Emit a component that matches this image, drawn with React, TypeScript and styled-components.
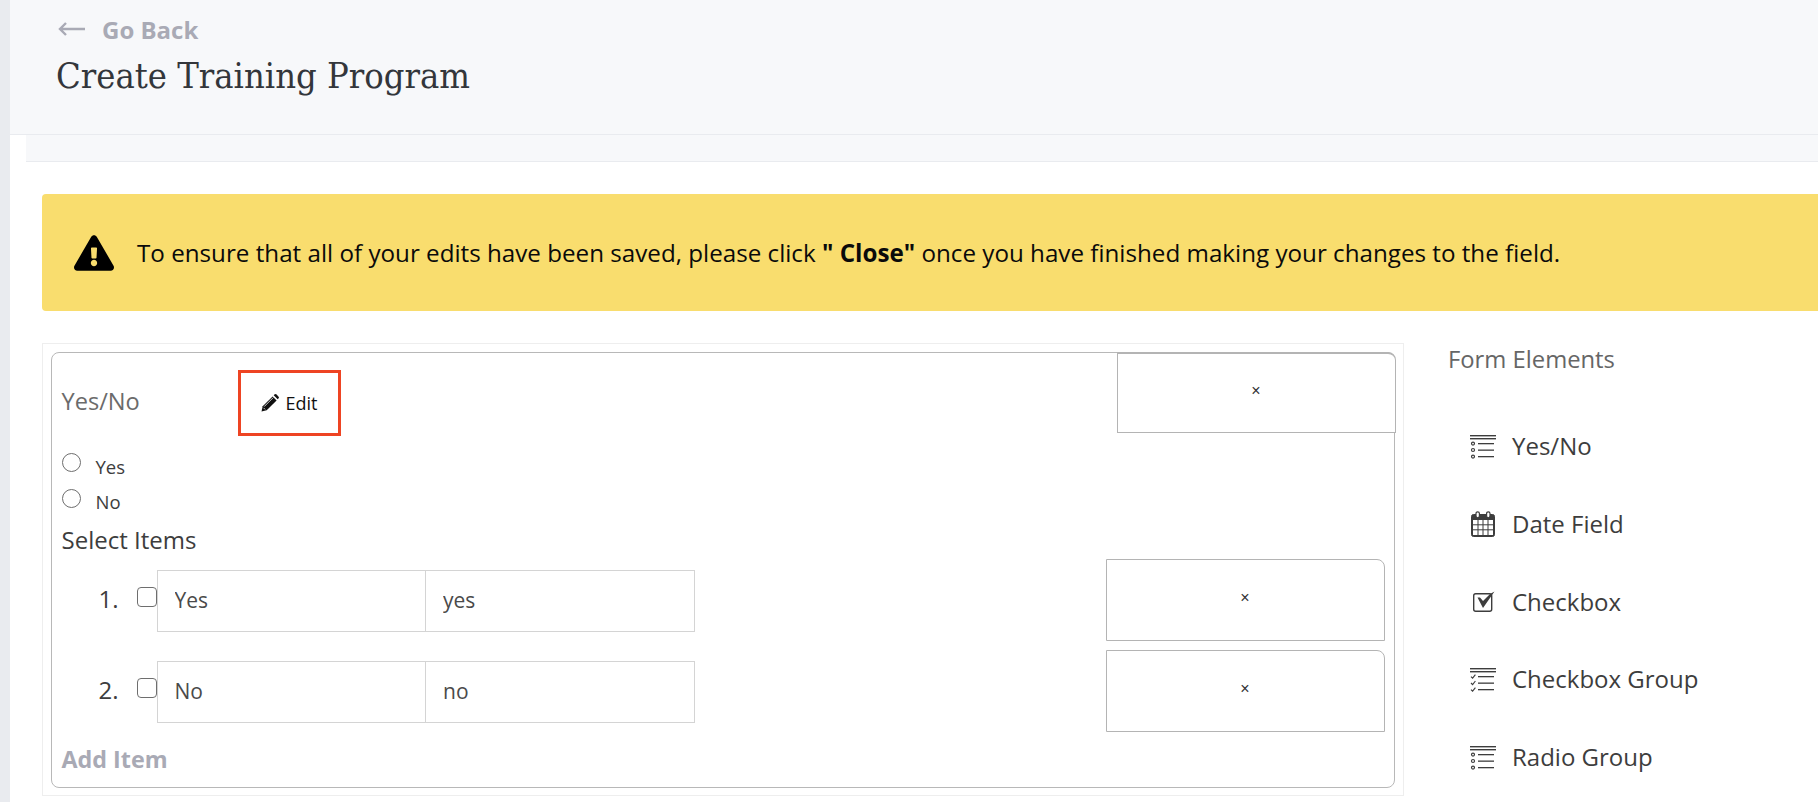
import { FC } from 'react';
import styled, { createGlobalStyle } from 'styled-components';
import { FaExclamationTriangle } from 'react-icons/fa';

const SANS = `'Open Sans', Lato, sans-serif`;

const GlobalStyle = createGlobalStyle`
  html, body {
    margin: 0;
    padding: 0;
    background: #fff;
    overflow: hidden;
  }
  * {
    box-sizing: border-box;
  }
`;

const ListLines: FC = () => (
  <>
    <rect x='0' y='2' width='26' height='1.4' />
    <rect x='0' y='5' width='26' height='1.4' />
    <rect x='8' y='10' width='16' height='1.3' />
    <rect x='8' y='16.5' width='16' height='1.3' />
    <rect x='8' y='23' width='16' height='1.3' />
  </>
);

const RadioListIcon: FC = () => (
  <svg width='26' height='26' viewBox='0 0 26 26' fill='#3d3d3d'>
    <ListLines />
    {[10.6, 17, 23.6].map((cy) => (
      <circle key={cy} cx='3' cy={cy} r='1.5' fill='none' stroke='#3d3d3d' strokeWidth='1.2' />
    ))}
  </svg>
);

const CheckListIcon: FC = () => (
  <svg width='26' height='26' viewBox='0 0 26 26' fill='#3d3d3d'>
    <ListLines />
    {[10.6, 17, 23.6].map((y) => (
      <path key={y} d={`M1 ${y}l1.6 1.6L5.4 ${y - 2}`} fill='none' stroke='#3d3d3d' strokeWidth='1.1' />
    ))}
  </svg>
);

const CalendarIcon: FC = () => (
  <svg width='26' height='26' viewBox='0 0 26 26' fill='none' stroke='#3d3d3d'>
    <rect x='1.5' y='3.5' width='23' height='22' rx='2' fill='#3d3d3d' />
    <rect x='3' y='9' width='20' height='15' fill='#fff' stroke='none' />
    <path d='M8 9v15M13 9v15M18 9v15M3 13.8h20M3 18.8h20' strokeWidth='1' />
    <rect x='6' y='0.8' width='3.4' height='6' rx='1.7' fill='#fff' strokeWidth='1.2' />
    <rect x='16.6' y='0.8' width='3.4' height='6' rx='1.7' fill='#fff' strokeWidth='1.2' />
  </svg>
);

const CheckboxIcon: FC = () => (
  <svg width='26' height='26' viewBox='0 0 26 26' fill='none'>
    <rect x='3.7' y='5.7' width='18' height='17.5' rx='2' stroke='#3d3d3d' strokeWidth='1.4' />
    <path d='M7.5 9.5h2.5l3 3.6L20 6l4.5-2.5L13 20z' fill='#3d3d3d' />
  </svg>
);

const PencilIcon: FC = () => (
  <svg width='18' height='18' viewBox='0 0 18 18' fill='#111'>
    <path d='M0.5 17.5l1.2-5.2L11.6 2.4l4 4-9.9 9.9z' />
    <path d='M12.7 1.3l.7-.7a1.6 1.6 0 0 1 2.2 0l1.8 1.8a1.6 1.6 0 0 1 0 2.2l-.7.7z' />
    <path d='M3.2 12.6l9-9' stroke='#fff' strokeWidth='.8' />
    <path d='M2.6 13.9l1.5 1.5' stroke='#fff' strokeWidth='.8' />
  </svg>
);

const ELEMENTS = [
  { label: 'Yes/No', icon: <RadioListIcon /> },
  { label: 'Date Field', icon: <CalendarIcon /> },
  { label: 'Checkbox', icon: <CheckboxIcon /> },
  { label: 'Checkbox Group', icon: <CheckListIcon /> },
  { label: 'Radio Group', icon: <RadioListIcon /> },
];

const ITEMS = [
  { label: 'Yes', value: 'yes' },
  { label: 'No', value: 'no' },
];

export default function App() {
  return (
    <SPage>
      <GlobalStyle />
      <SRail />
      <SMain>
        <SHeader>
          <SBackLink>
            <svg width='28' height='14' viewBox='0 0 28 14' fill='none' stroke='#a9aab5' strokeWidth='2.4'>
              <path d='M27 7H2M8 1L2 7l6 6' />
            </svg>
            Go Back
          </SBackLink>
          <STitle>Create Training Program</STitle>
        </SHeader>
        <SSubBar />
        <SContent>
          <SBanner>
            <FaExclamationTriangle size={40} color='#000' />
            <span>
              To ensure that all of your edits have been saved, please click <b>" Close"</b> once you
              have finished making your changes to the field.
            </span>
          </SBanner>
          <SBody>
            <SFormArea>
              <SCard>
                <SCardHeader>
                  <SFieldLabel>Yes/No</SFieldLabel>
                  <SEditButton>
                    <PencilIcon />
                    Edit
                  </SEditButton>
                  <SHeaderClose>×</SHeaderClose>
                </SCardHeader>
                <SRadioRow>
                  <SRadio type='radio' name='preview' />
                  <SRadioLabel>Yes</SRadioLabel>
                </SRadioRow>
                <SRadioRow>
                  <SRadio type='radio' name='preview' />
                  <SRadioLabel>No</SRadioLabel>
                </SRadioRow>
                <SSectionLabel>Select Items</SSectionLabel>
                <SItemList>
                  {ITEMS.map((item, i) => (
                    <SItemRow key={item.value}>
                      <SItemNumber>{i + 1}.</SItemNumber>
                      <SCheckbox type='checkbox' />
                      <SItemInput defaultValue={item.label} />
                      <SItemInput defaultValue={item.value} />
                      <SItemClose>×</SItemClose>
                    </SItemRow>
                  ))}
                </SItemList>
                <SAddItem>Add Item</SAddItem>
              </SCard>
            </SFormArea>
            <SSidebar>
              <SSidebarTitle>Form Elements</SSidebarTitle>
              <SElementList>
                {ELEMENTS.map((el) => (
                  <SElement key={el.label}>
                    {el.icon}
                    <span>{el.label}</span>
                  </SElement>
                ))}
              </SElementList>
            </SSidebar>
          </SBody>
        </SContent>
      </SMain>
    </SPage>
  );
}

const SPage = styled.div`
  display: flex;
  width: 1818px;
  height: 802px;
  overflow: hidden;
  font-family: ${SANS};
  color: #3d3d3d;
`;

const SRail = styled.div`
  flex: 0 0 10px;
  background: #e9ebef;
`;

const SMain = styled.div`
  flex: 1;
  min-width: 0;
`;

const SHeader = styled.header`
  height: 135px;
  padding: 14px 0 0 46px;
  background: #f7f8fa;
  border-bottom: 1px solid #e9ebef;
`;

const SBackLink = styled.a`
  display: flex;
  align-items: center;
  gap: 16px;
  height: 30px;
  padding-left: 2px;
  font-size: 24px;
  font-weight: 700;
  color: #a9aab5;
`;

const STitle = styled.h1`
  margin: 9px 0 0;
  font-family: 'DejaVu Serif Condensed', 'DejaVu Serif', serif;
  font-stretch: condensed;
  font-size: 36px;
  line-height: 46px;
  font-weight: 400;
  color: #33363b;
`;

const SSubBar = styled.div`
  height: 27px;
  margin-left: 16px;
  background: #f7f8fa;
  border-bottom: 1px solid #e9ebef;
`;

const SContent = styled.div`
  padding: 32px 0 0 32px;
`;

const SBanner = styled.div`
  display: flex;
  align-items: center;
  gap: 23px;
  width: 1800px;
  height: 117px;
  padding-left: 32px;
  background: #f9dd6e;
  border-radius: 4px;
  font-size: 24.2px;
  color: #0a0a0a;
`;

const SBody = styled.div`
  display: flex;
  margin-top: 32px;
`;

const SFormArea = styled.div`
  flex: 0 0 1362px;
  height: 453px;
  padding: 8px;
  border: 1px solid #eee;
`;

const SCard = styled.div`
  height: 436px;
  padding-left: 9.5px;
  border: 1.5px solid #b8b8b8;
  border-radius: 8px;
`;

const SCardHeader = styled.div`
  display: flex;
  align-items: flex-start;
  height: 100px;
`;

const SFieldLabel = styled.div`
  width: 176px;
  margin-top: 33px;
  font-size: 23.6px;
  line-height: 30px;
  color: #6b6b6b;
`;

const SEditButton = styled.button`
  display: flex;
  align-items: center;
  justify-content: center;
  gap: 7px;
  width: 103px;
  height: 66px;
  margin-top: 17px;
  padding: 0;
  background: #fff;
  border: 3px solid #ee4423;
  font-family: ${SANS};
  font-size: 18px;
  color: #111;
`;

const SCloseButton = styled.button`
  width: 279px;
  background: #fff;
  border: 1.5px solid #b4b4b4;
  border-radius: 0 8px 0 0;
  font-family: 'Liberation Sans', sans-serif;
  font-size: 16px;
  color: #333;
`;

const SHeaderClose = styled(SCloseButton)`
  height: 81px;
  margin: -1.5px -1.5px 0 auto;
  padding: 0 0 4px;
  border-top-width: 2px;
`;

const SItemClose = styled(SCloseButton)`
  height: 82px;
  margin-left: auto;
  padding: 0 0 4px;
`;

const SRadioRow = styled.label`
  display: flex;
  align-items: flex-start;
  height: 35.5px;
`;

const SRadio = styled.input`
  appearance: none;
  width: 19px;
  height: 19px;
  margin: 0;
  background: #fff;
  border: 1.5px solid #6e6e6e;
  border-radius: 50%;
`;

const SRadioLabel = styled.span`
  margin: 1.5px 0 0 15px;
  font-size: 18.5px;
  line-height: 23px;
  color: #3d3d3d;
`;

const SSectionLabel = styled.div`
  margin-top: 1px;
  font-size: 24px;
  line-height: 30px;
  color: #3d3d3d;
`;

const SItemList = styled.div`
  display: flex;
  flex-direction: column;
  gap: 9px;
  margin-top: 4px;
  padding-right: 9.5px;
`;

const SItemRow = styled.div`
  display: flex;
  align-items: center;
`;

const SItemNumber = styled.div`
  flex: 0 0 57px;
  margin-top: -4px;
  text-align: right;
  font-size: 24px;
  color: #3d3d3d;
`;

const SCheckbox = styled.input`
  appearance: none;
  flex: 0 0 20px;
  height: 20px;
  margin: -7px 0 0 18px;
  background: #fff;
  border: 1.5px solid #6e6e6e;
  border-radius: 4px;
`;

const SItemInput = styled.input`
  width: 269.5px;
  height: 62px;
  margin: 2px -1px 0 0;
  padding: 0 0 2px 17px;
  background: #fff;
  border: 1.5px solid #d4d4d4;
  border-radius: 0;
  outline: none;
  font-family: ${SANS};
  font-size: 21px;
  color: #4a4a4a;
`;

const SAddItem = styled.div`
  margin-top: 11.5px;
  font-size: 23.3px;
  line-height: 30px;
  font-weight: 700;
  color: #a9aab5;
`;

const SSidebar = styled.aside`
  flex: 1;
  padding-left: 44px;
`;

const SSidebarTitle = styled.div`
  margin-top: 1px;
  font-size: 23.8px;
  line-height: 30px;
  color: #666;
`;

const SElementList = styled.div`
  display: grid;
  grid-auto-rows: 77.7px;
  margin-top: 33px;
  padding-left: 22px;
`;

const SElement = styled.div`
  display: flex;
  align-items: center;
  gap: 16px;
  font-size: 24px;
  color: #3d3d3d;
`;
